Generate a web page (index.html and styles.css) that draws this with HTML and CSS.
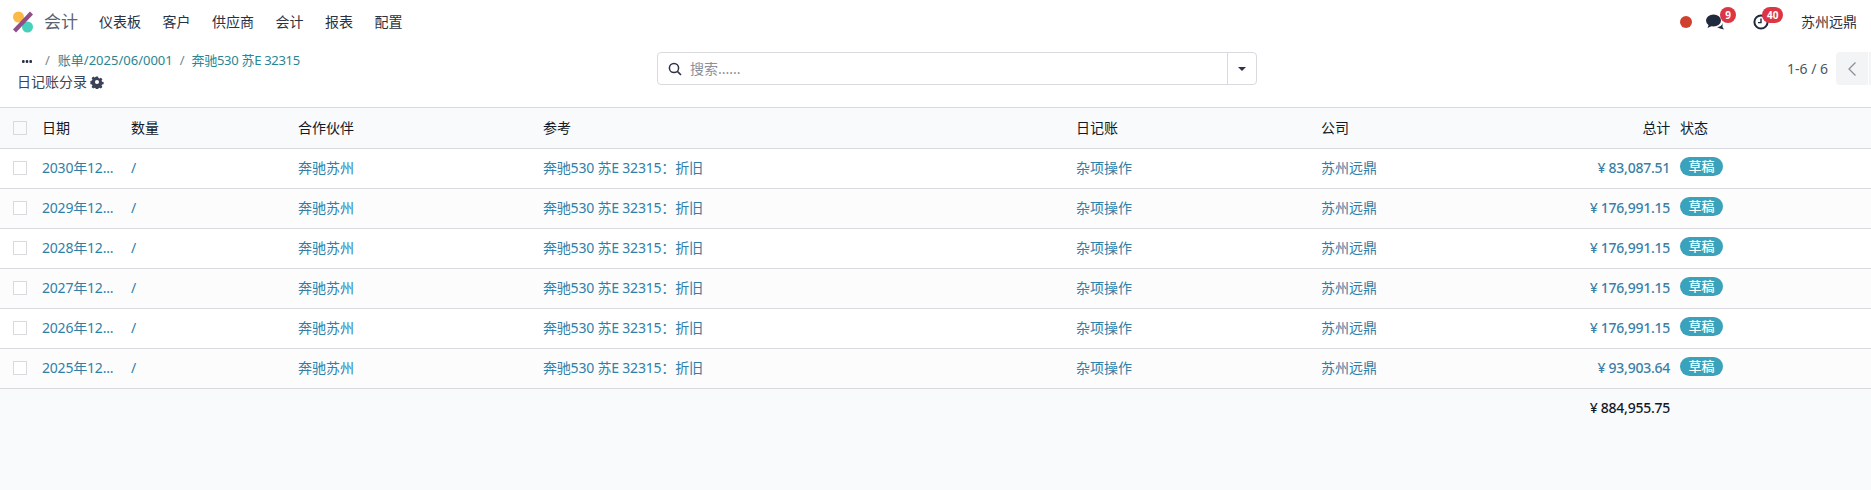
FILE: index.html
```html
<!DOCTYPE html>
<html lang="zh">
<head>
<meta charset="utf-8">
<title>日记账分录</title>
<link rel="stylesheet" href="styles.css">
</head>
<body>
<header class="navbar">
  <svg class="logo" viewBox="0 0 22 22" aria-hidden="true">
    <circle cx="6.5" cy="6" r="5.5" fill="#fbb945"/>
    <circle cx="15.5" cy="16" r="5.5" fill="#49d0bd"/>
    <path d="M2.5 20 L19.5 2" stroke="#8f4f86" stroke-width="4.2" stroke-linecap="butt"/>
  </svg>
  <span class="brand">会计</span>
  <nav class="menu">
    <a>仪表板</a><a>客户</a><a>供应商</a><a>会计</a><a>报表</a><a>配置</a>
  </nav>
  <div class="systray">
    <span class="status-dot"></span>
    <span class="tray-item chat">
      <svg class="tray-icon" viewBox="0 0 18 16" aria-hidden="true">
        <ellipse cx="7.5" cy="6.5" rx="7.5" ry="6" fill="#1f2a3d"/>
        <path d="M3 10 L1.5 14 L7 11.5Z" fill="#1f2a3d"/>
        <path d="M11 13 C14 13 16 11.5 16.5 9 L16.5 13 L18 15.5 L14 14.5Z" fill="#1f2a3d"/>
      </svg>
      <b class="badge">9</b>
    </span>
    <span class="tray-item clock">
      <svg class="tray-icon" viewBox="0 0 16 16" aria-hidden="true">
        <circle cx="8" cy="8" r="6.6" fill="none" stroke="#1f2a3d" stroke-width="2"/>
        <path d="M8 4.5 V8.6 H5" fill="none" stroke="#1f2a3d" stroke-width="1.4"/>
      </svg>
      <b class="badge">40</b>
    </span>
    <span class="company">苏州远鼎</span>
  </div>
</header>

<section class="panel">
  <div class="panel-left">
    <div class="crumbs">
      <svg class="dots" viewBox="0 0 10 3" aria-hidden="true">
        <rect width="2.6" height="3" rx="1" fill="#2d3448"/>
        <rect x="3.7" width="2.6" height="3" rx="1" fill="#2d3448"/>
        <rect x="7.4" width="2.6" height="3" rx="1" fill="#2d3448"/>
      </svg>
      <span class="sep">/</span>
      <a>账单/2025/06/0001</a>
      <span class="sep">/</span>
      <a class="tight">奔驰530 苏E 32315</a>
    </div>
    <div class="title">日记账分录
      <svg class="gear" viewBox="0 0 16 16" aria-hidden="true">
        <path fill-rule="evenodd" fill="#3b4256" d="M6.6 1h2.8l.4 2 1.3.6 1.8-1.1 2 2-1.1 1.8.6 1.3 2 .4v2.8l-2 .4-.6 1.3 1.1 1.8-2 2-1.8-1.1-1.3.6-.4 2H6.6l-.4-2-1.3-.6-1.8 1.1-2-2 1.1-1.8-.6-1.3-2-.4V6.6l2-.4.6-1.3L1.1 3.1l2-2 1.8 1.1 1.3-.6zM8 5.4a2.6 2.6 0 1 0 0 5.2 2.6 2.6 0 0 0 0-5.2z" transform="translate(.8 .8) scale(.9)"/>
      </svg>
    </div>
  </div>
  <div class="search">
    <svg class="search-icon" viewBox="0 0 14 14" aria-hidden="true">
      <circle cx="6" cy="6" r="4.6" fill="none" stroke="#2d3448" stroke-width="1.5"/>
      <path d="M9.4 9.4 L13 13" stroke="#2d3448" stroke-width="1.6"/>
    </svg>
    <span class="placeholder">搜索......</span>
    <span class="search-toggle"><i class="caret"></i></span>
  </div>
  <div class="panel-right">
    <span class="pager">1-6 / 6</span>
    <span class="pager-btn">
      <svg viewBox="0 0 10 16" aria-hidden="true"><path d="M8.5 1.5 L2 8 L8.5 14.5" fill="none" stroke="#8a8f99" stroke-width="1.3"/></svg>
    </span>
    <span class="pager-btn next"></span>
  </div>
</section>

<main class="content">
<table class="list">
  <colgroup>
    <col class="c-check"><col class="c-date"><col class="c-qty"><col class="c-partner"><col class="c-ref"><col class="c-journal"><col class="c-company"><col class="c-total"><col class="c-state">
  </colgroup>
  <thead>
    <tr>
      <th><span class="check"></span></th><th>日期</th><th>数量</th><th>合作伙伴</th><th>参考</th><th>日记账</th><th>公司</th><th class="num">总计</th><th>状态</th>
    </tr>
  </thead>
  <tbody>
    <tr><td><span class="check"></span></td><td class="tight">2030年12...</td><td>/</td><td>奔驰苏州</td><td class="tight">奔驰530 苏E 32315：折旧</td><td>杂项操作</td><td>苏州远鼎</td><td class="num">¥ 83,087.51</td><td><span class="pill">草稿</span></td></tr>
    <tr><td><span class="check"></span></td><td class="tight">2029年12...</td><td>/</td><td>奔驰苏州</td><td class="tight">奔驰530 苏E 32315：折旧</td><td>杂项操作</td><td>苏州远鼎</td><td class="num">¥ 176,991.15</td><td><span class="pill">草稿</span></td></tr>
    <tr><td><span class="check"></span></td><td class="tight">2028年12...</td><td>/</td><td>奔驰苏州</td><td class="tight">奔驰530 苏E 32315：折旧</td><td>杂项操作</td><td>苏州远鼎</td><td class="num">¥ 176,991.15</td><td><span class="pill">草稿</span></td></tr>
    <tr><td><span class="check"></span></td><td class="tight">2027年12...</td><td>/</td><td>奔驰苏州</td><td class="tight">奔驰530 苏E 32315：折旧</td><td>杂项操作</td><td>苏州远鼎</td><td class="num">¥ 176,991.15</td><td><span class="pill">草稿</span></td></tr>
    <tr><td><span class="check"></span></td><td class="tight">2026年12...</td><td>/</td><td>奔驰苏州</td><td class="tight">奔驰530 苏E 32315：折旧</td><td>杂项操作</td><td>苏州远鼎</td><td class="num">¥ 176,991.15</td><td><span class="pill">草稿</span></td></tr>
    <tr><td><span class="check"></span></td><td class="tight">2025年12...</td><td>/</td><td>奔驰苏州</td><td class="tight">奔驰530 苏E 32315：折旧</td><td>杂项操作</td><td>苏州远鼎</td><td class="num">¥ 93,903.64</td><td><span class="pill">草稿</span></td></tr>
  </tbody>
  <tfoot>
    <tr><td colspan="7"></td><td class="num">¥ 884,955.75</td><td></td></tr>
  </tfoot>
</table>
</main>
</body>
</html>
```
FILE: styles.css
```css
* { box-sizing: border-box; }
html, body { height: 100%; }
body {
  margin: 0;
  display: flex;
  flex-direction: column;
  overflow: hidden;
  background: #fff;
  color: #1f2937;
  font: 14px/20px "Noto Sans", "Noto Sans CJK SC", sans-serif;
}

/* top navbar */
.navbar {
  display: flex;
  align-items: center;
  height: 44px;
  padding: 0 0 0 12px;
  flex: none;
}
.logo { width: 22px; height: 22px; flex: none; }
.brand { margin-left: 10px; font-size: 17px; color: #5b6472; }
.menu { display: flex; gap: 21.5px; margin-left: 21px; color: #2a3142; }
.systray { display: flex; align-items: center; margin-left: auto; }
.status-dot { width: 12px; height: 12px; border-radius: 50%; background: #d0402f; margin-right: 14px; }
.tray-item { position: relative; display: flex; margin-right: 29px; }
.tray-item.clock { margin-right: 32px; }
.tray-icon { width: 18px; height: 16px; display: block; }
.clock .tray-icon { width: 16px; }
.badge {
  position: absolute;
  top: -7px;
  left: 14px;
  min-width: 16px;
  height: 16px;
  padding: 0 5px;
  border-radius: 8px;
  background: #dc3545;
  color: #fff;
  font-size: 10px;
  line-height: 16px;
  font-weight: 700;
  text-align: center;
}
.chat .badge { padding: 0; }
.clock .badge { left: 9px; }
.company { margin-right: 14px; color: #2a3142; }

/* control panel */
.panel {
  display: flex;
  height: 64px;
  flex: none;
  border-bottom: 1px solid #d8dadd;
}
.panel-left { width: 657px; padding: 6px 0 0 17px; flex: none; }
.crumbs { display: flex; align-items: center; gap: 7px; height: 20px; font-size: 13px; color: #1f7a8c; white-space: nowrap; }
.dots { width: 10px; height: 3px; margin: 3px 6px 0 5px; flex: none; }
.sep { color: #7b8494; margin: 0 1px 0 0; }
.crumbs a { color: #2a8592; }
.crumbs a.tight { letter-spacing: -.3px; margin-left: -1px; }
.title { display: flex; align-items: center; gap: 3px; margin-top: 2px; color: #3d4453; white-space: nowrap; }
.gear { width: 14px; height: 14px; }

.search {
  display: flex;
  align-items: center;
  width: 600px;
  height: 33px;
  margin-top: 8px;
  padding-left: 10px;
  border: 1px solid #d8dadd;
  border-radius: 4px;
  flex: none;
}
.search-icon { width: 14px; height: 14px; flex: none; }
.placeholder { margin-left: 8px; color: #8a909b; }
.search-toggle {
  display: flex;
  align-items: center;
  justify-content: center;
  width: 29px;
  height: 100%;
  margin-left: auto;
  border-left: 1px solid #d8dadd;
}
.caret { width: 0; height: 0; border: 4px solid transparent; border-top: 4px solid #2d3448; border-bottom: 0; }

.panel-right {
  flex: 1;
  display: flex;
  align-items: flex-start;
  justify-content: flex-end;
  margin-top: 8px;
  gap: 1px;
  overflow: hidden;
  white-space: nowrap;
}
.pager { margin: 7px 7px 0 0; color: #4b5567; }
.pager-btn {
  display: flex;
  align-items: center;
  justify-content: center;
  width: 32px;
  height: 33px;
  background: #f3f4f6;
  border-radius: 4px 0 0 4px;
  flex: none;
}
.pager-btn svg { width: 10px; height: 16px; }
.pager-btn.next { width: 2px; border-radius: 0; }

/* list */
.content { flex: 1; background: #f9fafb; }
.list { width: 100%; table-layout: fixed; border-collapse: collapse; }
.c-check { width: 35px; }
.c-date { width: 89px; }
.c-qty { width: 167px; }
.c-partner { width: 245px; }
.c-ref { width: 533px; }
.c-journal { width: 245px; }
.c-company { width: 245px; }
.c-total { width: 114px; }
.list th, .list td {
  height: 40px;
  padding: 0 7px;
  text-align: left;
  font-weight: 400;
  white-space: nowrap;
  vertical-align: middle;
}
.list th:first-child, .list tbody td:first-child { padding: 0 0 0 13px; }
.list th { background: #f9fafb; color: #111827; border-bottom: 1px solid #d8dadd; }
.list tbody td { color: #2f80a8; border-bottom: 1px solid #d8dadd; }
.list tbody td.tight { letter-spacing: -.2px; }
.list tbody tr:nth-child(odd) td { background: #fff; }
.list tbody tr:nth-child(even) td { background: #fcfcfd; }
.list .num { text-align: right; padding-right: 3px; letter-spacing: -.25px; }
.list tbody td.num { color: #3a7fa6; font-weight: 500; }
.list tfoot td { color: #111827; font-weight: 500; }
.check { display: block; width: 14px; height: 14px; border: 1px solid #d8dadd; background: #fff; }
.list th .check { background: #f9fafb; }
.pill {
  display: inline-block;
  position: relative;
  top: -2px;
  width: 43px;
  height: 19px;
  border-radius: 10px;
  background: #3aa3bb;
  color: #fff;
  font-size: 13px;
  font-weight: 500;
  line-height: 19px;
  text-align: center;
}
```
